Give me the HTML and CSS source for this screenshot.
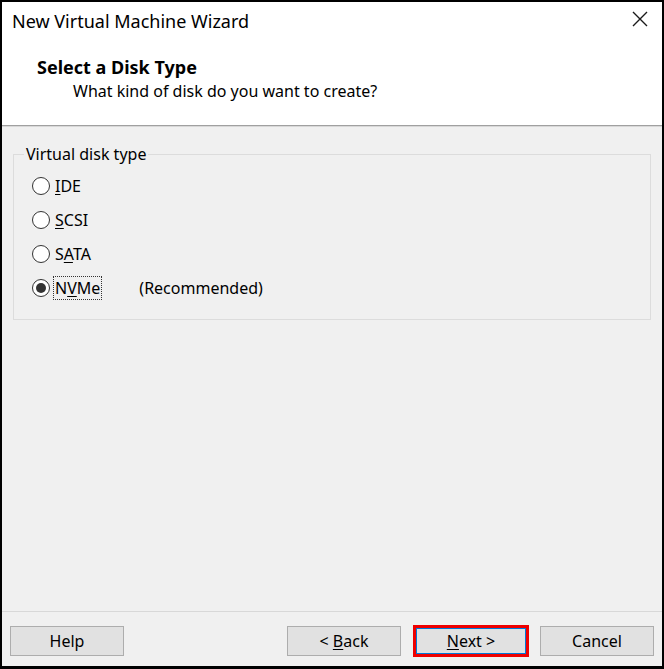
FILE: index.html
```html
<!DOCTYPE html>
<html lang="en">
<head>
<meta charset="utf-8">
<title>New Virtual Machine Wizard</title>
<link rel="stylesheet" href="styles.css">
</head>
<body>
<div class="window">
  <div class="titlebar">
    <span class="title">New Virtual Machine Wizard</span>
    <span class="close" aria-label="Close">
      <svg width="16" height="16" viewBox="0 0 16 16"><path d="M1 1 L15 15 M15 1 L1 15" stroke="#1a1a1a" stroke-width="1.4" fill="none"/></svg>
    </span>
  </div>
  <div class="header">
    <div class="heading">Select a Disk Type</div>
    <div class="subheading">What kind of disk do you want to create?</div>
  </div>
  <div class="content">
    <fieldset class="group">
      <legend class="legend">Virtual disk type</legend>
      <div class="option">
        <span class="radio"></span>
        <span class="label"><u>I</u>DE</span>
      </div>
      <div class="option">
        <span class="radio"></span>
        <span class="label"><u>S</u>CSI</span>
      </div>
      <div class="option">
        <span class="radio"></span>
        <span class="label">S<u>A</u>TA</span>
      </div>
      <div class="option">
        <span class="radio checked"></span>
        <span class="label focus">N<u>V</u>Me</span>
        <span class="note">(Recommended)</span>
      </div>
    </fieldset>
  </div>
  <div class="footer">
    <button class="btn">Help</button>
    <div class="spacer"></div>
    <button class="btn">&lt; <u>B</u>ack</button>
    <span class="highlight"><button class="btn primary"><u>N</u>ext &gt;</button></span>
    <button class="btn">Cancel</button>
  </div>
</div>
</body>
</html>
```

FILE: styles.css
```css
* { box-sizing: border-box; }
html, body {
  margin: 0;
  padding: 0;
  background: #000;
}
body {
  font-family: "Noto Sans", "Open Sans", sans-serif;
  font-size: 16px;
  color: #000;
}
.window {
  width: 664px;
  height: 669px;
  border-style: solid;
  border-color: #000;
  border-width: 2px 2px 3px 2px;
  background: #f0f0f0;
  display: flex;
  flex-direction: column;
}
.titlebar {
  height: 38px;
  background: #fff;
  display: flex;
  align-items: center;
  justify-content: space-between;
  padding: 0 14px 0 10px;
}
.title {
  font-size: 18px;
  color: #000;
}
.close {
  display: flex;
  width: 16px;
  height: 16px;
  margin-top: -4px;
}
.header {
  background: #fff;
  height: 86px;
  padding: 15px 0 0 35px;
  border-bottom: 1px solid #a0a0a0;
  box-shadow: 0 1px 0 #d8d8d8;
}
.heading {
  font-weight: 700;
  font-size: 18px;
  line-height: 24px;
}
.subheading {
  padding-left: 36px;
  line-height: 22px;
  margin-top: 1px;
}
.content {
  flex: 1;
  padding: 18px 11px 0 11px;
}
.group {
  margin: 0;
  border: 1px solid #dcdcdc;
  padding: 5px 0 14px 18px;
  height: 176px;
}
.legend {
  padding: 0 2px;
  margin-left: -8px;
  line-height: 20px;
}
.option {
  display: flex;
  align-items: center;
  height: 34px;
}
.radio {
  width: 18px;
  height: 18px;
  border: 1px solid #333;
  border-radius: 50%;
  background: #fff;
  display: flex;
  align-items: center;
  justify-content: center;
  margin-right: 3px;
}
.radio.checked::after {
  content: "";
  width: 10px;
  height: 10px;
  border-radius: 50%;
  background: #333;
}
.label {
  padding: 0 1px;
  line-height: 22px;
  border: 1px dotted transparent;
}
.label.focus {
  border-color: #333;
}
.label u { text-underline-offset: 2px; }
.note {
  margin-left: 37px;
}
.footer {
  height: 55px;
  border-top: 1px solid #d8d8d8;
  display: flex;
  align-items: flex-start;
  padding: 14px 8px 0 8px;
}
.spacer { flex: 1; }
.btn {
  font-family: inherit;
  font-size: 16px;
  width: 114px;
  height: 30px;
  background: #e1e1e1;
  border: 1px solid #adadad;
  color: #000;
  padding: 0;
}
.btn u { text-underline-offset: 2px; }
.highlight {
  display: flex;
  border: 3px solid #ee0000;
  margin: -1px -2px 0 12px;
}
.highlight + .btn {
  margin-left: 13px;
}
.btn.primary {
  border: 1px solid #0078d7;
  width: 110px;
  height: 26px;
}
```
